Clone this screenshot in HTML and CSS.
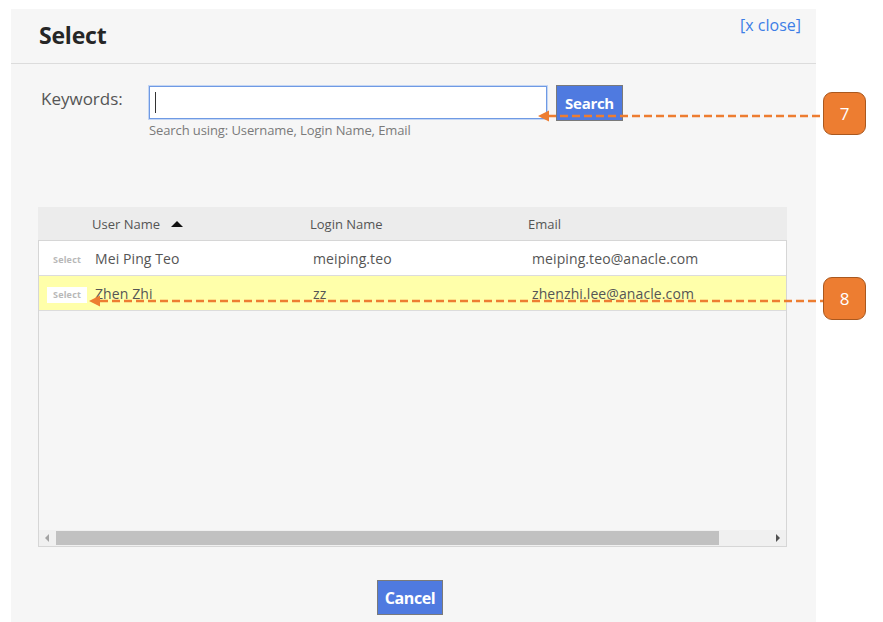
FILE: index.html
```html
<!DOCTYPE html>
<html>
<head>
<meta charset="utf-8">
<title>Select</title>
<link rel="stylesheet" href="styles.css">
</head>
<body>
<div class="dialog">
  <div class="dlg-head">
    <div class="dlg-title">Select</div>
    <a class="dlg-close">[x close]</a>
  </div>
  <div class="search">
    <div class="search-label">Keywords:</div>
    <div class="search-field">
      <div class="search-line">
        <div class="input"><span class="caret"></span></div>
        <button class="btn btn-search">Search</button>
      </div>
      <div class="hint">Search using: Username, Login Name, Email</div>
    </div>
  </div>
  <div class="grid">
    <div class="grid-head">
      <div class="cell c0"></div>
      <div class="cell c1">User Name <span class="sort"></span></div>
      <div class="cell c2">Login Name</div>
      <div class="cell c3">Email</div>
    </div>
    <div class="grid-body">
      <div class="row">
        <div class="cell c0"><span class="sel">Select</span></div>
        <div class="cell c1">Mei Ping Teo</div>
        <div class="cell c2">meiping.teo</div>
        <div class="cell c3">meiping.teo@anacle.com</div>
      </div>
      <div class="row row-hl">
        <div class="cell c0"><span class="sel sel-on">Select</span></div>
        <div class="cell c1">Zhen Zhi</div>
        <div class="cell c2">zz</div>
        <div class="cell c3">zhenzhi.lee@anacle.com</div>
      </div>
      <div class="filler"></div>
      <div class="hscroll">
        <div class="sb-btn sb-left"><span class="tri-l"></span></div>
        <div class="sb-track"><div class="sb-thumb"></div></div>
        <div class="sb-btn sb-right"><span class="tri-r"></span></div>
      </div>
    </div>
  </div>
  <div class="footer">
    <button class="btn btn-cancel">Cancel</button>
  </div>
</div>

<svg class="annot" width="883" height="622" viewBox="0 0 883 622">
  <line x1="548" y1="116" x2="823" y2="116" class="dash"/>
  <polygon points="538,116 549,110.5 549,121.5" class="head"/>
  <line x1="100" y1="301" x2="823" y2="301" class="dash"/>
  <polygon points="89,301 100,295.5 100,306.5" class="head"/>
</svg>
<div class="badge badge-7">7</div>
<div class="badge badge-8">8</div>
</body>
</html>
```

FILE: styles.css
```css
html, body {
  margin: 0;
  padding: 0;
  background: #ffffff;
  width: 883px;
  height: 622px;
  overflow: hidden;
  font-family: "Open Sans", "Noto Sans", sans-serif;
}
.dialog {
  margin: 9px 0 0 11px;
  width: 805px;
  height: 613px;
  background: #f6f6f6;
  display: flex;
  flex-direction: column;
}
.dlg-head {
  height: 54px;
  border-bottom: 1px solid #dcdcdc;
  display: flex;
  justify-content: space-between;
  align-items: flex-start;
  padding: 0 15px 0 28px;
}
.dlg-title {
  font-size: 23px;
  font-weight: 700;
  color: #262626;
  line-height: 32px;
  padding-top: 10px;
  letter-spacing: -0.2px;
}
.dlg-close {
  font-size: 16px;
  color: #3d7ee6;
  line-height: 22px;
  padding-top: 5px;
}
.search {
  display: flex;
  padding: 21px 0 0 30px;
}
.search-label {
  width: 108px;
  font-size: 17px;
  color: #555;
  line-height: 28px;
  padding-top: 0;
}
.search-line {
  display: flex;
  align-items: flex-start;
}
.input {
  width: 391px;
  height: 31px;
  margin-top: 1px;
  background: #fff;
  border: 1px solid #6f9ae4;
  box-shadow: 0 0 0 1px #c4d6f4;
  display: flex;
  align-items: center;
  padding-left: 5px;
  box-sizing: content-box;
}
.caret {
  width: 1px;
  height: 21px;
  background: #333;
}
.btn {
  font-family: "Open Sans", "Noto Sans", sans-serif;
  font-weight: 700;
  color: #fff;
  background: #4f7ae0;
  border: 1px solid #7a7a7a;
  padding: 0;
  margin: 0;
}
.btn-search {
  margin-left: 9px;
  width: 67px;
  height: 36px;
  font-size: 15px;
  letter-spacing: -0.3px;
}
.hint {
  font-size: 13px;
  color: #7a7a7a;
  margin-top: 0;
  line-height: 18px;
  letter-spacing: -0.1px;
}
.grid {
  margin: 68px 0 0 27px;
  width: 749px;
}
.grid-head {
  height: 33px;
  background: #ececec;
  display: flex;
  align-items: center;
  font-size: 13px;
  color: #555;
}
.cell { box-sizing: border-box; white-space: nowrap; }
.c0 { width: 51px; }
.c1 { width: 218px; }
.c2 { width: 218px; }
.c3 { flex: 1; }
.grid-head .c1, .grid-head .c2, .grid-head .c3 { padding-left: 3px; }
.sort {
  display: inline-block;
  width: 0;
  height: 0;
  border-left: 6px solid transparent;
  border-right: 6px solid transparent;
  border-bottom: 6px solid #111;
  margin-left: 8px;
  vertical-align: 2px;
}
.grid-body {
  height: 305px;
  border: 1px solid #d6d6d6;
  display: flex;
  flex-direction: column;
  background: #f6f6f6;
}
.row {
  height: 34px;
  border-bottom: 1px solid #dcdcdc;
  background: #fff;
  display: flex;
  align-items: center;
  font-size: 14px;
  color: #555;
  flex: none;
  letter-spacing: 0.1px;
}
.row-hl { background: #ffffaa; }
.row .c1, .row .c2, .row .c3 { padding-left: 5px; }
.row .c3 { padding-left: 6px; }
.sel {
  display: inline-block;
  margin-left: 8px;
  padding: 0 6px;
  height: 16px;
  line-height: 15px;
  font-size: 9px;
  font-weight: 700;
  color: #b8b8b8;
  letter-spacing: 0.2px;
}
.sel-on { background: #fff; }
.filler { flex: 1; }
.hscroll {
  height: 16px;
  display: flex;
  background: #f0f0f0;
  flex: none;
}
.sb-btn {
  width: 16px;
  display: flex;
  align-items: center;
  justify-content: center;
}
.tri-l {
  width: 0; height: 0;
  border-top: 4px solid transparent;
  border-bottom: 4px solid transparent;
  border-right: 4px solid #a3a3a3;
}
.tri-r {
  width: 0; height: 0;
  border-top: 4px solid transparent;
  border-bottom: 4px solid transparent;
  border-left: 4px solid #505050;
}
.sb-track {
  flex: 1;
  display: flex;
  align-items: center;
}
.sb-thumb {
  width: 663px;
  height: 14px;
  margin-left: 1px;
  background: #c1c1c1;
}
.footer {
  display: flex;
  justify-content: center;
  padding: 33px 7px 0 0;
}
.btn-cancel {
  width: 66px;
  height: 35px;
  font-size: 16px;
  letter-spacing: -0.4px;
}
.annot {
  position: absolute;
  left: 0;
  top: 0;
  pointer-events: none;
}
.dash {
  stroke: #ed7d31;
  stroke-width: 2.5;
  stroke-dasharray: 8 4;
}
.head { fill: #ed7d31; }
.badge {
  position: absolute;
  left: 823px;
  width: 41px;
  height: 41px;
  border: 1.5px solid #a9581f;
  border-radius: 9px;
  background: #ed7d31;
  color: #fff;
  font-size: 17px;
  display: flex;
  align-items: center;
  justify-content: center;
  font-family: "Open Sans", "Noto Sans", sans-serif;
}
.badge-7 { top: 92px; }
.badge-8 { top: 277px; }
```
